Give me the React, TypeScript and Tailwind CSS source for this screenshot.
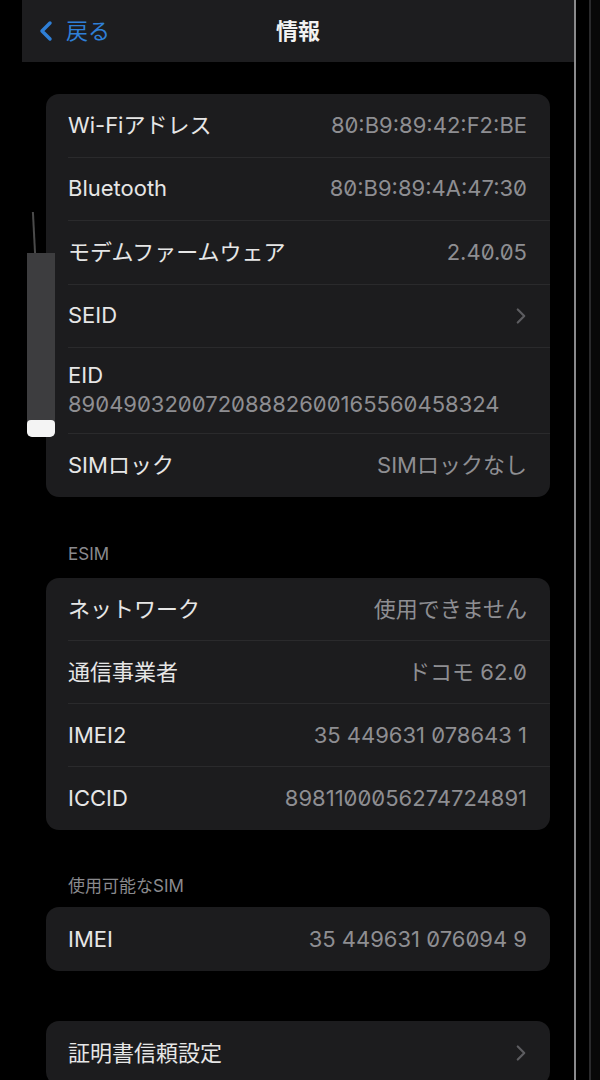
import React from "react";
import { ChevronLeft, ChevronRight } from "lucide-react";

const labelFont = "font-['Inter','Noto_Sans_CJK_JP',sans-serif]";

type Row = { label: string; value?: string; chevron?: boolean };

const Cell = ({ label, value, chevron, last, h = "h-[63.5px]" }: Row & { last?: boolean; h?: string }) => (
  <div className={`${h} flex items-center pl-[22px]`}>
    <div
      className={`h-full flex-1 flex items-center justify-between pr-[23px] ${
        last ? "" : "border-b border-[#2a2a2c]"
      }`}
    >
      <span className="text-[22px] text-[#e6e6e6]">{label}</span>
      {value && <span className="text-[22px] text-[#8e8e92] slashed-zero">{value}</span>}
      {chevron && <ChevronRight size={26} strokeWidth={2} className="text-[#5c5c60] -mr-[7px]" />}
    </div>
  </div>
);

const Card = ({ children }: { children: React.ReactNode }) => (
  <div className="mx-[24px] rounded-[13px] bg-[#1c1c1e] overflow-hidden">{children}</div>
);

export default function App() {
  return (
    <div className={`w-[600px] h-[1080px] bg-black relative overflow-hidden flex ${labelFont}`}>
      <div className="ml-[22px] w-[554px] border-r-2 border-[#8a8a8c]">
        {/* nav bar */}
        <div className="h-[62px] bg-[#1d1d1f] relative flex items-center justify-center">
          <div className="absolute left-[8px] top-0 h-full flex items-center text-[#2f7fd6]">
            <ChevronLeft size={32} strokeWidth={2.6} />
            <span className="ml-[4px] text-[22px]">戻る</span>
          </div>
          <span className="text-[22px] font-semibold text-[#f2f2f2]">情報</span>
        </div>

        <div className="mt-[32px]">
          <Card>
            <Cell label="Wi-Fiアドレス" value="80:B9:89:42:F2:BE" />
            <Cell label="Bluetooth" value="80:B9:89:4A:47:30" />
            <Cell label="モデムファームウェア" value="2.40.05" />
            <Cell label="SEID" chevron />
            <div className="h-[85.5px] pl-[22px]">
              <div className="h-full border-b border-[#2a2a2c] flex flex-col justify-center">
                <span className="text-[22px] text-[#e6e6e6] leading-[28px]">EID</span>
                <span className="text-[22px] text-[#8e8e92] leading-[30px] slashed-zero">
                  89049032007208882600165560458324
                </span>
              </div>
            </div>
            <Cell label="SIMロック" value="SIMロックなし" last />
          </Card>
        </div>

        <div className="mt-[48px] mb-[13px] pl-[46px] h-[20px] flex items-center text-[17px] text-[#8a8a8e]">
          ESIM
        </div>
        <Card>
          <Cell label="ネットワーク" value="使用できません" h="h-[63px]" />
          <Cell label="通信事業者" value="ドコモ 62.0" h="h-[63px]" />
          <Cell label="IMEI2" value="35 449631 078643 1" h="h-[63px]" />
          <Cell label="ICCID" value="8981100056274724891" last h="h-[63px]" />
        </Card>

        <div className="mt-[47px] mb-[10px] pl-[46px] h-[20px] flex items-center text-[17px] text-[#8a8a8e]">
          使用可能なSIM
        </div>
        <Card>
          <Cell label="IMEI" value="35 449631 076094 9" last h="h-[64px]" />
        </Card>

        <div className="mt-[50px]">
          <Card>
            <Cell label="証明書信頼設定" chevron last h="h-[64px]" />
          </Card>
        </div>
      </div>
      <div className="flex-1 flex">
        <div className="w-[13px]" />
        <div className="w-[2px] bg-[#2a2a2c]" />
        <div className="flex-1 bg-[#080808]" />
      </div>

      {/* object in front of the screen at the left edge */}
      <div className="absolute left-[33px] top-[212px] w-[2px] h-[42px] bg-[#4a4a4a] rotate-[-3deg]" />
      <div className="absolute left-[27px] top-[253px] w-[28px] h-[184px] rounded-b-[5px] bg-[#3d3d3f] overflow-hidden flex flex-col justify-end">
        <div className="h-[17px] bg-[#f4f4f4] rounded-[4px]" />
      </div>
    </div>
  );
}
